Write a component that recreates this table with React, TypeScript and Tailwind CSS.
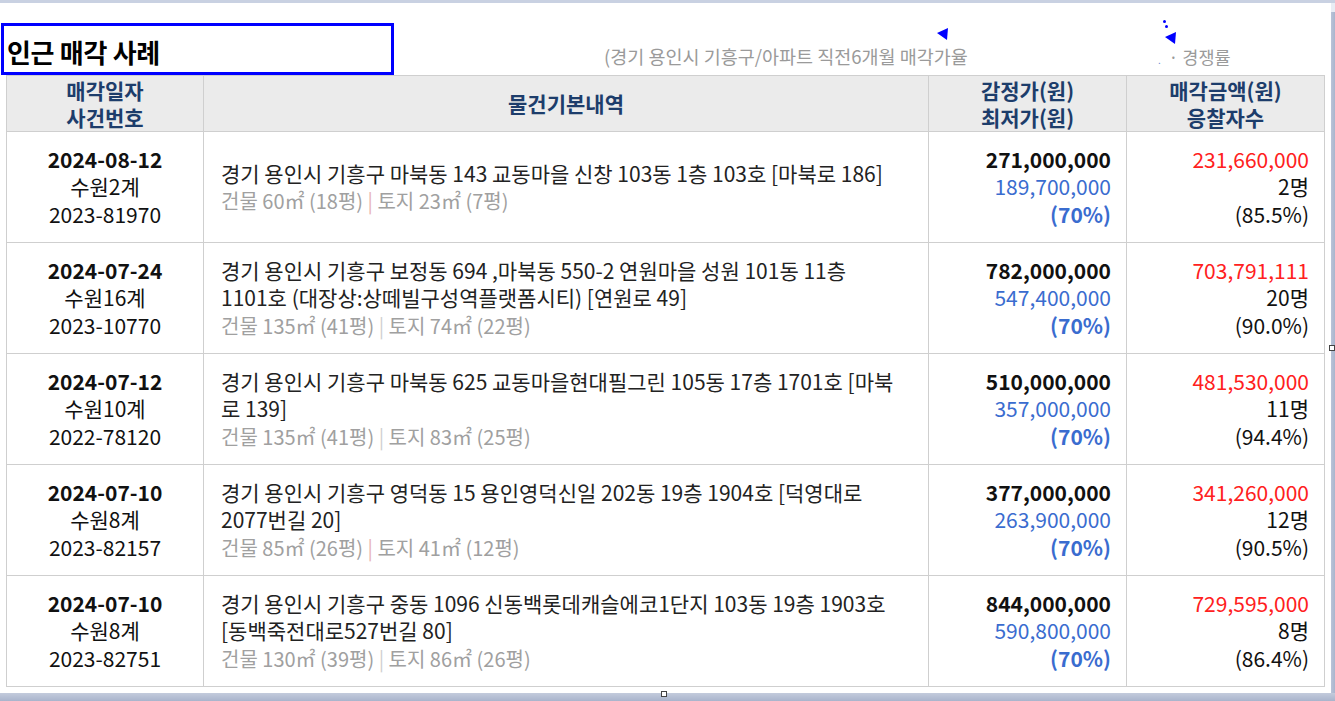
import React from "react";

type Row = {
  date: string;
  court: string;
  caseNo: string;
  addr: string[];
  bld: string;
  land: string;
  sepRed: boolean;
  appraisal: string;
  minPrice: string;
  sale: string;
  bidders: string;
  rate: string;
};

const rows: Row[] = [
  {
    date: "2024-08-12",
    court: "수원2계",
    caseNo: "2023-81970",
    addr: ["경기 용인시 기흥구 마북동 143 교동마을 신창 103동 1층 103호 [마북로 186]"],
    bld: "건물 60㎡ (18평)",
    land: "토지 23㎡ (7평)",
    sepRed: true,
    appraisal: "271,000,000",
    minPrice: "189,700,000",
    sale: "231,660,000",
    bidders: "2명",
    rate: "(85.5%)",
  },
  {
    date: "2024-07-24",
    court: "수원16계",
    caseNo: "2023-10770",
    addr: [
      "경기 용인시 기흥구 보정동 694 ,마북동 550-2 연원마을 성원 101동 11층",
      "1101호 (대장상:상떼빌구성역플랫폼시티) [연원로 49]",
    ],
    bld: "건물 135㎡ (41평)",
    land: "토지 74㎡ (22평)",
    sepRed: false,
    appraisal: "782,000,000",
    minPrice: "547,400,000",
    sale: "703,791,111",
    bidders: "20명",
    rate: "(90.0%)",
  },
  {
    date: "2024-07-12",
    court: "수원10계",
    caseNo: "2022-78120",
    addr: [
      "경기 용인시 기흥구 마북동 625 교동마을현대필그린 105동 17층 1701호 [마북",
      "로 139]",
    ],
    bld: "건물 135㎡ (41평)",
    land: "토지 83㎡ (25평)",
    sepRed: false,
    appraisal: "510,000,000",
    minPrice: "357,000,000",
    sale: "481,530,000",
    bidders: "11명",
    rate: "(94.4%)",
  },
  {
    date: "2024-07-10",
    court: "수원8계",
    caseNo: "2023-82157",
    addr: [
      "경기 용인시 기흥구 영덕동 15 용인영덕신일 202동 19층 1904호 [덕영대로",
      "2077번길 20]",
    ],
    bld: "건물 85㎡ (26평)",
    land: "토지 41㎡ (12평)",
    sepRed: true,
    appraisal: "377,000,000",
    minPrice: "263,900,000",
    sale: "341,260,000",
    bidders: "12명",
    rate: "(90.5%)",
  },
  {
    date: "2024-07-10",
    court: "수원8계",
    caseNo: "2023-82751",
    addr: [
      "경기 용인시 기흥구 중동 1096 신동백롯데캐슬에코1단지 103동 19층 1903호",
      "[동백죽전대로527번길 80]",
    ],
    bld: "건물 130㎡ (39평)",
    land: "토지 86㎡ (26평)",
    sepRed: false,
    appraisal: "844,000,000",
    minPrice: "590,800,000",
    sale: "729,595,000",
    bidders: "8명",
    rate: "(86.4%)",
  },
];

const font = {
  fontFamily: '"Noto Sans CJK KR", "Noto Sans", sans-serif',
};

function Triangle() {
  return (
    <svg width="11" height="12" viewBox="0 0 11 12">
      <polygon points="0,5 11,0 10,12" fill="#0000ff" />
    </svg>
  );
}

export default function App() {
  return (
    <div
      className="w-[1335px] h-[701px] relative overflow-hidden bg-white flex flex-col"
      style={font}
    >
      <div className="h-[3px] bg-[#c9d1e2] w-full shrink-0" />
      <div className="flex flex-1 min-h-0">
        <div className="w-[1331px] bg-white flex flex-col">
          <div className="flex items-end h-[72px]">
            <div className="w-[393px] h-[52px] ml-[1px] border-[3px] border-[#0000ff] flex items-center pl-[3px] pt-[6px]">
              <span className="text-[26px] font-bold text-black leading-none tracking-[-0.3px]">
                인근 매각 사례
              </span>
            </div>
            <div className="relative flex-1 h-full">
              <span className="absolute left-[210px] top-[44px] text-[18.5px] text-[#9a9a9a] leading-none">
                (경기 용인시 기흥구/아파트 직전6개월 매각가율
              </span>
              <span className="absolute left-[543px] top-[25px]">
                <Triangle />
              </span>
              <span className="absolute left-[768px] top-[17px] flex flex-col items-start">
                <span className="w-[3px] h-[3px] bg-[#0000ff] rounded-full ml-[1px]" />
                <span className="w-[3px] h-[3px] bg-[#0000ff] rounded-full ml-[3px] mt-[2px]" />
              </span>
              <span className="absolute left-[771px] top-[29px]">
                <Triangle />
              </span>
              <span className="absolute left-[764px] top-[45px] text-[17.5px] text-[#9a9a9a] leading-none whitespace-pre">
                <span className="text-[#6b8bd0] text-[10px]">.</span>  · 경쟁률
              </span>
            </div>
          </div>
          <table className="ml-[6px] w-[1318px] border-collapse table-fixed">
            <colgroup>
              <col className="w-[197px]" />
              <col className="w-[725px]" />
              <col className="w-[198px]" />
              <col className="w-[198px]" />
            </colgroup>
            <thead>
              <tr className="h-[56px] bg-[#ebebeb] text-[#1d3d6b] font-bold text-[21px] leading-[26.5px]">
                <th className="border border-[#cfcfcf] font-bold">
                  <div>매각일자</div>
                  <div>사건번호</div>
                </th>
                <th className="border border-[#cfcfcf] font-bold">물건기본내역</th>
                <th className="border border-[#cfcfcf] font-bold">
                  <div>감정가(원)</div>
                  <div>최저가(원)</div>
                </th>
                <th className="border border-[#cfcfcf] font-bold">
                  <div>매각금액(원)</div>
                  <div>응찰자수</div>
                </th>
              </tr>
            </thead>
            <tbody>
              {rows.map((r, i) => (
                <tr key={i} className="h-[111px] text-[21px] leading-[27.5px]">
                  <td className="border border-[#cfcfcf] text-center align-middle text-[#111]">
                    <div className="font-bold">{r.date}</div>
                    <div>{r.court}</div>
                    <div>{r.caseNo}</div>
                  </td>
                  <td className="border border-[#cfcfcf] align-middle pl-[17px] pr-[4px] text-[#222] whitespace-nowrap overflow-hidden">
                    {r.addr.map((l, j) => (
                      <div key={j}>{l}</div>
                    ))}
                    <div className="text-[20px] text-[#a0a0a0]">
                      {r.bld}{" "}
                      <span className={r.sepRed ? "text-[#e8b4b4]" : "text-[#cfcfcf]"}>|</span>{" "}
                      {r.land}
                    </div>
                  </td>
                  <td className="border border-[#cfcfcf] text-right align-middle pr-[15px]">
                    <div className="font-bold text-[#111]">{r.appraisal}</div>
                    <div className="text-[#3a6ccf]">{r.minPrice}</div>
                    <div className="font-bold text-[#3a6ccf]">(70%)</div>
                  </td>
                  <td className="border border-[#cfcfcf] text-right align-middle pr-[15px]">
                    <div className="text-[#ff2020]">{r.sale}</div>
                    <div className="text-[#111]">{r.bidders}</div>
                    <div className="text-[#111]">{r.rate}</div>
                  </td>
                </tr>
              ))}
            </tbody>
          </table>
          <div className="flex-1" />
        </div>
        <div className="w-[4px] flex flex-col">
          <div className="h-[9px] bg-[#e9edf5]" />
          <div className="flex-1 bg-gradient-to-r from-[#b9c3d8] to-[#a9b5cd]" />
        </div>
      </div>
      <div className="h-[8px] bg-gradient-to-b from-[#c3cbdc] to-[#a9b4cc] shrink-0" />
      <span className="absolute left-[661px] top-[691px] w-[6px] h-[6px] border border-[#444] bg-white" />
      <span className="absolute left-[1329px] top-[345px] w-[6px] h-[6px] border border-[#444] bg-white" />
    </div>
  );
}
